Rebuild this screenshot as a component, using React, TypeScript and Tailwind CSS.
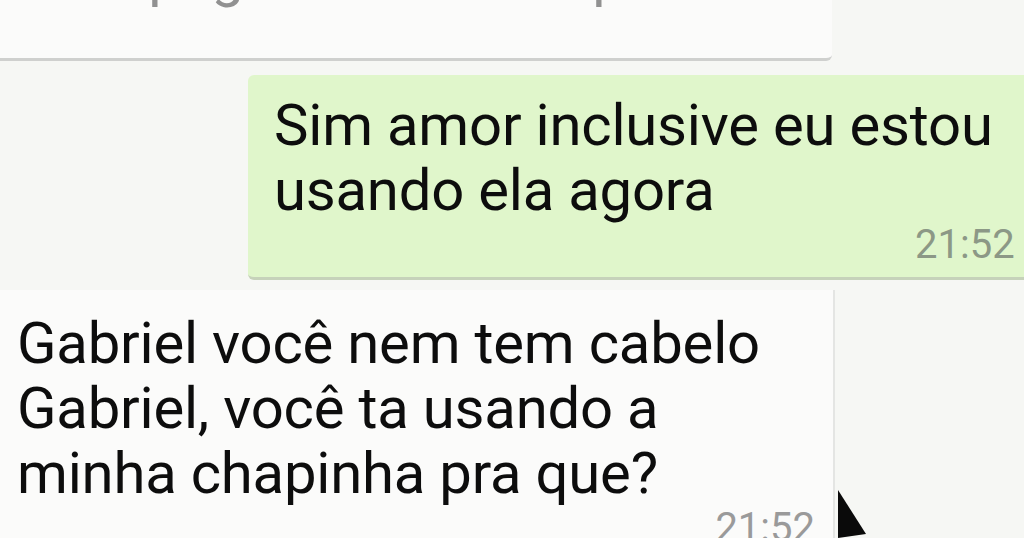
import React from 'react'

const font = { fontFamily: 'Roboto, "Noto Sans", Arial, sans-serif' }

export default function App() {
  return (
    <div
      className="relative h-[538px] w-[1024px] overflow-hidden bg-[#f6f7f4] text-[#0d0d0d]"
      style={font}
    >
      {/* previous incoming bubble, mostly scrolled away */}
      <div className="h-[61px] w-[832px] overflow-hidden rounded-br-md border-b-[3px] border-[#cfd0ce] bg-[#fbfbfa]">
        <p className="-mt-[57px] pl-[4px] text-[58px] leading-[65px] text-[#2a2a2a] opacity-50">
          Você pegou minha chapinha?
        </p>
      </div>

      {/* outgoing bubble */}
      <div className="ml-[248px] mt-[14px] flex h-[205px] w-[800px] flex-col rounded-l-md border-b-[3px] border-[#c6d2ba] bg-[#e0f6cb] pl-[26px] pt-[18px]">
        <p className="text-[58px] leading-[65px] tracking-[-0.2px]">
          Sim amor inclusive eu estou
          <br />
          usando ela agora
        </p>
        <span className="mt-[2px] self-start pl-[641px] text-[40px] leading-[40px] text-[#8c9886]">21:52</span>
      </div>

      {/* incoming bubble */}
      <div className="mt-[10px] flex h-[260px] w-[835px] flex-col border-r-2 border-[#e4e5e3] bg-[#fbfbfa] pl-[17px] pt-[21px]">
        <p className="text-[58px] leading-[65px] tracking-[-0.2px]">
          Gabriel você nem tem cabelo
          <br />
          Gabriel, você ta usando a
          <br />
          minha chapinha pra que?
        </p>
        <span className="mt-[2px] self-end pr-[18px] text-[40px] leading-[40px] text-[#9a9a9a]">21:52</span>
      </div>

      {/* mouse pointer */}
      <svg className="absolute left-[836px] top-[490px]" width="34" height="60" viewBox="0 0 34 60">
        <polygon points="2,0 2,48 30,44" fill="#0a0a0a" />
      </svg>
    </div>
  )
}
